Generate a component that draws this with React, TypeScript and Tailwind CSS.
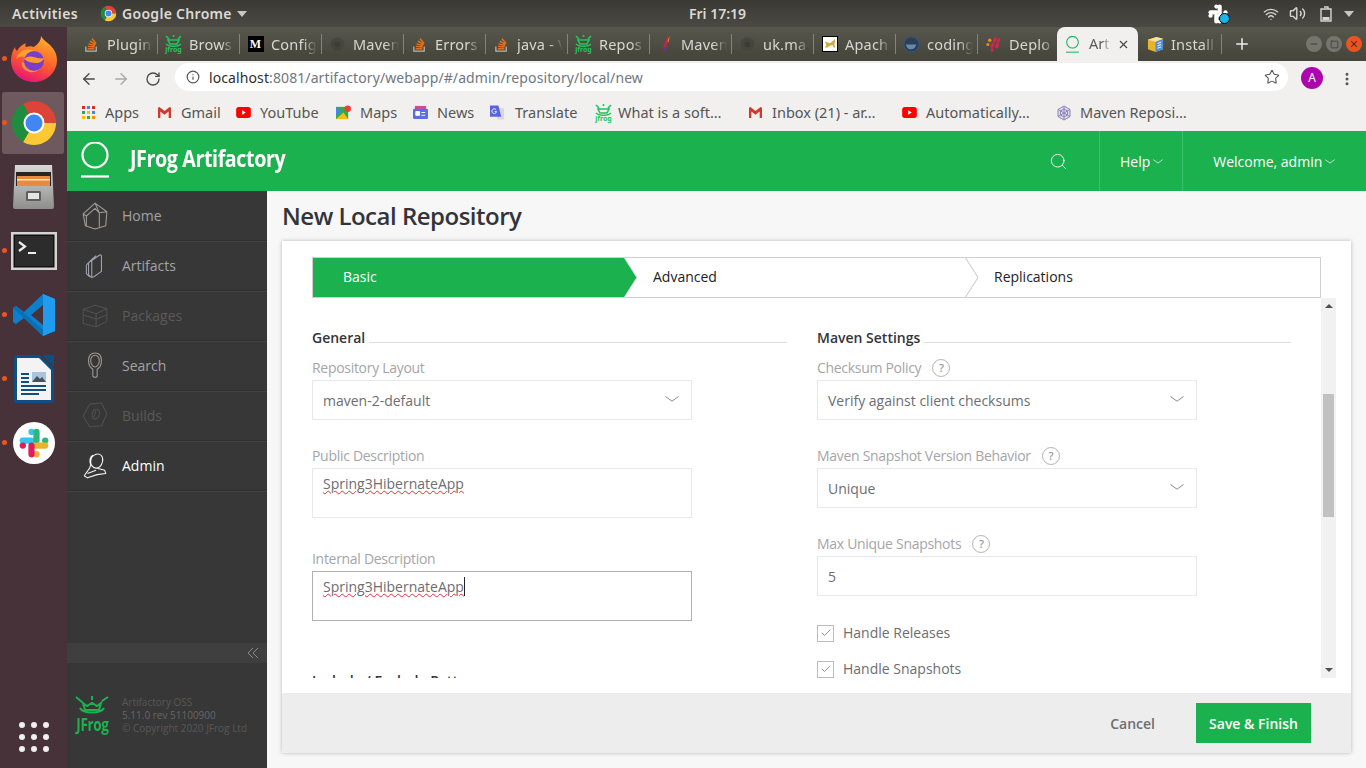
import React from "react";
import { ArrowLeft, ArrowRight, RotateCw, Info, Star, X, Plus, Search, Check, Minus, Square, Wifi, Volume2, EllipsisVertical } from "lucide-react";

const Chrome = ({ s }: { s: string }) => (
  <svg viewBox="0 0 48 48" className={s}>
    <path d="M24 24L13 4.95A22 22 0 0 1 46 24Z" fill="#db4437" />
    <path d="M24 24L46 24A22 22 0 0 1 13 43.05Z" fill="#fcc934" />
    <path d="M24 24L13 43.05A22 22 0 0 1 13 4.95Z" fill="#1e8e3e" />
    <circle cx="24" cy="24" r="10.5" fill="#fff" />
    <circle cx="24" cy="24" r="8.5" fill="#4285f4" />
  </svg>
);
const Firefox = () => (
  <svg viewBox="0 0 48 48" className="w-[48px] h-[48px]">
    <defs>
      <linearGradient id="ff" x1="0.7" y1="0" x2="0.3" y2="1">
        <stop offset="0" stopColor="#ffb32c" />
        <stop offset="0.55" stopColor="#ff5a2c" />
        <stop offset="1" stopColor="#e3127a" />
      </linearGradient>
    </defs>
    <path d="M31 1c2 4 6 6 9 9 5 5 7 10 7 15 0 12-10 22-23 22S1 38 1 25c0-5 2-10 4-13 0 2 1 3 2 4 2-4 5-6 9-8-1 2-1 3 0 4 3-1 5-1 8 0 4-3 7-6 7-11z" fill="url(#ff)" />
    <path d="M6 24c2-7 9-11 16-9 8 1 13 8 11 15-3 6-10 9-16 6-4-2-6-5-5-9l5 2c4 1 8-1 9-4-4 1-9-2-12-3-3-1-6 0-8 2z" fill="#ffd23c" opacity="0.55" />
    <circle cx="24" cy="26" r="10" fill="#7b3fc7" />
    <path d="M14 24c3-3 7-3 10-2 3 1 7 2 10 1-1 3-4 5-8 5-4 0-8-1-12-4z" fill="#ff9a2c" />
  </svg>
);
const Files = () => (
  <svg viewBox="0 0 44 46" className="w-[44px] h-[46px]">
    <defs>
      <linearGradient id="fc" x1="0" y1="0" x2="0" y2="1">
        <stop offset="0" stopColor="#d8d8d6" />
        <stop offset="1" stopColor="#8e8e8c" />
      </linearGradient>
    </defs>
    <path d="M3 1h37l2 42a2 2 0 0 1-2 2H3a2 2 0 0 1-2-2z" fill="url(#fc)" />
    <rect x="4" y="8" width="35" height="14" fill="#2a2623" />
    <rect x="5" y="12" width="33" height="10" fill="#e98a3f" />
    <rect x="5" y="15" width="33" height="1.5" fill="#fbe5c7" />
    <rect x="14" y="27" width="15" height="10" rx="1.5" fill="#5e5e5c" />
    <rect x="16" y="29" width="11" height="6" fill="#e6e6e4" />
  </svg>
);
const Terminal = () => (
  <svg viewBox="0 0 46 38" className="w-[46px] h-[38px]">
    <rect x="0" y="0" width="46" height="38" fill="#d4d4d1" />
    <rect x="2.5" y="2.5" width="41" height="33" fill="#111" />
    <rect x="4" y="4" width="38" height="30" fill="#2c2c2c" />
    <path d="M8 10l6 4.5-6 4.5" fill="none" stroke="#eee" strokeWidth="2.2" />
    <path d="M17 21h8" stroke="#eee" strokeWidth="2" />
  </svg>
);
const VSCode = () => (
  <svg viewBox="0 0 44 44" className="w-[44px] h-[44px]">
    <path d="M31 1l12 5v32l-12 5L12 25 4 31l-3-2V15l3-2 8 6z" fill="#0e7fcb" />
    <path d="M31 1l12 5v32l-12 5z" fill="#1f9cf0" />
    <path d="M31 12L19 22l12 10z" fill="#47323a" />
    <path d="M1 15l3-2 27 24v6z" fill="#0a6fb5" />
  </svg>
);
const Writer = () => (
  <svg viewBox="0 0 42 48" className="w-[42px] h-[48px]">
    <path d="M1 3a3 3 0 0 1 3-3h23l14 14v31a3 3 0 0 1-3 3H4a3 3 0 0 1-3-3z" fill="#0d4f80" />
    <path d="M4 3h22l12 12v30H4z" fill="#f3f3f3" />
    <path d="M29 0h12v12z" fill="#0d4f80" />
    <rect x="8" y="18" width="8" height="2" fill="#0d4f80" /><rect x="8" y="22" width="8" height="2" fill="#0d4f80" /><rect x="8" y="26" width="8" height="2" fill="#0d4f80" />
    <rect x="19" y="17" width="14" height="10" fill="#a9c4dc" />
    <path d="M19 27l5-6 3 3 2-2 4 5z" fill="#45525c" />
    <rect x="8" y="30" width="25" height="2" fill="#0d4f80" /><rect x="8" y="34" width="25" height="2" fill="#0d4f80" /><rect x="8" y="38" width="18" height="2" fill="#0d4f80" />
  </svg>
);
const SlackMark = ({ s, mono }: { s: string; mono?: boolean }) => (
  <svg viewBox="0 0 24 24" className={s}>
    <g strokeWidth="5" strokeLinecap="round" fill="none">
      <path d="M3 10h7" stroke={mono ? "#fff" : "#36c5f0"} />
      <path d="M10 3v.1" stroke={mono ? "#fff" : "#36c5f0"} />
      <path d="M14 3v7" stroke={mono ? "#fff" : "#2eb67d"} />
      <path d="M21 10h-.1" stroke={mono ? "#fff" : "#2eb67d"} />
      <path d="M21 14h-7" stroke={mono ? "#fff" : "#ecb22e"} />
      <path d="M14 21v-.1" stroke={mono ? "#fff" : "#ecb22e"} />
      <path d="M10 21v-7" stroke={mono ? "#fff" : "#e01e5a"} />
      <path d="M3 14h.1" stroke={mono ? "#fff" : "#e01e5a"} />
    </g>
  </svg>
);

const SO = () => (
  <svg viewBox="0 0 18 18" className="w-[17px] h-[17px] shrink-0">
    <path d="M3 11v5h11v-5" fill="none" stroke="#b9b6ae" strokeWidth="1.3" />
    <path d="M5 13.5h7M5.2 11l7 .6M5.9 8.3l6.8 1.7M7.3 5.5l6 3.3M9.5 3l4.4 5" fill="none" stroke="#e8711f" strokeWidth="1.5" />
  </svg>
);
const FrogIcon = () => (
  <span className="w-[17px] h-[18px] shrink-0 flex flex-col items-center">
    <svg viewBox="0 0 17 12" className="w-[17px] h-[12px]">
      <path d="M1 1l3 3M16 1l-3 3M8.5 0v2M3 5h11l-2 4H5zM1 9c3 3 12 3 15 0" fill="none" stroke="#22c55e" strokeWidth="1.6" />
    </svg>
    <span className="text-[7px] leading-[6px] font-bold text-[#22c55e]">jfrog</span>
  </span>
);
const DarkDot = () => (
  <svg viewBox="0 0 18 18" className="w-[17px] h-[17px] shrink-0">
    <circle cx="9" cy="9" r="7.5" fill="#45443d" stroke="#4d4c45" />
    <circle cx="9" cy="9" r="3" fill="#3c3b35" />
  </svg>
);
const Medium = () => (
  <span className="w-[16px] h-[16px] shrink-0 bg-black text-white text-[12px] leading-[16px] font-bold text-center [font-family:'Liberation_Serif',serif]">M</span>
);
const Feather = () => (
  <svg viewBox="0 0 18 18" className="w-[17px] h-[17px] shrink-0">
    <path d="M13 0c-4 3-6 9-7 16l3-1c1-5 3-10 4-15z" fill="#c2264b" />
    <path d="M13 0l-2 6 1.2.5C13 4 13.4 2 13 0z" fill="#ef7c2b" />
    <path d="M6 16l1-5 2 1-.5 3z" fill="#6a2d8e" />
  </svg>
);
const Tomcat = () => (
  <svg viewBox="0 0 16 16" className="w-[16px] h-[16px] shrink-0 bg-white border border-black">
    <path d="M2 5l3 1 3 1 4-3 1-2 1 3-1 3 1 4h-2l-1-3-3 1-3 2H2l2-3z" fill="#d6a63e" />
  </svg>
);
const Docker = () => (
  <svg viewBox="0 0 18 18" className="w-[17px] h-[17px] shrink-0">
    <circle cx="9" cy="9" r="8" fill="#2b3f58" stroke="#2d5a88" />
    <path d="M3 9h11c-1 4-3 5-6 5-3 0-4-2-5-5z" fill="#6b8aa8" />
  </svg>
);
const Deploy = () => (
  <svg viewBox="0 0 18 18" className="w-[17px] h-[17px] shrink-0">
    <g fill="#d8234f">
      <rect x="9" y="1" width="3" height="6" rx="1.5" transform="rotate(20 10 4)" />
      <rect x="13" y="2" width="3" height="5" rx="1.5" transform="rotate(20 14 4)" />
      <rect x="6" y="7" width="3.5" height="6" rx="1.7" transform="rotate(20 8 10)" />
      <rect x="11" y="7" width="3.5" height="6" rx="1.7" transform="rotate(20 12 10)" />
      <rect x="6" y="13" width="3" height="4" rx="1.5" transform="rotate(20 8 15)" />
    </g>
    <g fill="#ef8a2b">
      <circle cx="3" cy="9" r="1.6" /><circle cx="5" cy="4.5" r="1.8" />
    </g>
  </svg>
);
const BoxIcon = () => (
  <svg viewBox="0 0 18 18" className="w-[17px] h-[17px] shrink-0">
    <path d="M1 4l9-3 7 2v11l-8 3-8-3z" fill="#e7b52c" />
    <path d="M9 6l8-3v11l-8 3z" fill="#4f8fd6" />
    <path d="M11 8l4-1.500M11 10.500l4-1.500M11 13l4-1.500" stroke="#fff" />
    <path d="M1 4l8 2 8-3-7-2z" fill="#f7e39c" />
  </svg>
);
const ArtLogo = ({ s }: { s: string }) => (
  <svg viewBox="0 0 28 36" className={s} fill="none" stroke="currentColor">
    <circle cx="14" cy="13" r="12.500" strokeWidth="2.200" />
    <path d="M0 34.500h28" strokeWidth="2.200" />
  </svg>
);
const Caret = ({ s, stroke }: { s: string; stroke: string }) => (
  <svg viewBox="0 0 14 6" className={s} fill="none" stroke={stroke} strokeWidth="1">
    <path d="M0.500 0.500L7 5.200l6.500-4.700" />
  </svg>
);

const tabs: { icon: React.ReactNode; label: string }[] = [
  { icon: <SO />, label: "Plugin" },
  { icon: <FrogIcon />, label: "Brows" },
  { icon: <Medium />, label: "Config" },
  { icon: <DarkDot />, label: "Maven" },
  { icon: <SO />, label: "Errors" },
  { icon: <SO />, label: "java - V" },
  { icon: <FrogIcon />, label: "Repos" },
  { icon: <Feather />, label: "Maven" },
  { icon: <DarkDot />, label: "uk.ma" },
  { icon: <Tomcat />, label: "Apach" },
  { icon: <Docker />, label: "coding" },
  { icon: <Deploy />, label: "Deplo" },
];

const Tab = ({ icon, label, last }: { icon: React.ReactNode; label: string; last?: boolean }) => (
  <div className="w-[82px] shrink-0 h-[34px] flex items-center">
    <div className={`w-[81px] h-[20px] flex items-center pl-[6px] ${last ? "" : "border-r border-[#85837a]"}`}>
      <span className="w-[17px] flex justify-center">{icon}</span>
      <span className="ml-[7px] w-[46px] overflow-hidden whitespace-nowrap text-[14.5px] leading-[20px] tracking-[0.2px] text-[#d9d7d0] [mask-image:linear-gradient(90deg,#000_70%,transparent)]">{label}</span>
    </div>
  </div>
);

const Gmail = () => (
  <svg viewBox="0 0 16 14" className="w-[15px] h-[13px]">
    <path d="M1 2v11h2.500V6L8 9.500 12.500 6v7H15V2l-1.500-1L8 5.500 2.500 1z" fill="#cf3a2a" />
  </svg>
);
const YT = () => (
  <svg viewBox="0 0 16 12" className="w-[15px] h-[11px]">
    <rect width="16" height="12" rx="3" fill="#f00" />
    <path d="M6.500 3.500l4 2.500-4 2.500z" fill="#fff" />
  </svg>
);

const bookmarks: { w: string; icon: React.ReactNode; label: string; gap: string }[] = [
  {
    w: "w-[75px]", gap: "ml-[10px]", label: "Apps",
    icon: (
      <span className="grid grid-cols-3 gap-[2px] w-[13px]">
        {["bg-[#d93025]", "bg-[#4285f4]", "bg-[#d93025]", "bg-[#34a853]", "bg-[#fbbc04]", "bg-[#4285f4]", "bg-[#fbbc04]", "bg-[#34a853]", "bg-[#fb8c00]"].map((c, i) => (
          <span key={i} className={`w-[3px] h-[3px] ${c}`} />
        ))}
      </span>
    ),
  },
  { w: "w-[79px]", gap: "ml-[9px]", label: "Gmail", icon: <Gmail /> },
  { w: "w-[100px]", gap: "ml-[9px]", label: "YouTube", icon: <YT /> },
  {
    w: "w-[77px]", gap: "ml-[9px]", label: "Maps",
    icon: (
      <svg viewBox="0 0 16 16" className="w-[15px] h-[15px]">
        <path d="M0 2h13v13H0z" fill="#34a853" />
        <path d="M0 15l8-7 5 7z" fill="#fbbc04" />
        <path d="M0 2l5 5-5 4z" fill="#4285f4" />
        <circle cx="12.500" cy="4" r="3.500" fill="#ea4335" />
      </svg>
    ),
  },
  {
    w: "w-[77px]", gap: "ml-[9px]", label: "News",
    icon: (
      <svg viewBox="0 0 16 16" className="w-[15px] h-[15px]">
        <rect x="2" y="1" width="12" height="5" fill="#d84a8f" />
        <rect y="4" width="16" height="11" rx="1.500" fill="#5b6ee1" />
        <path d="M3 7h4v4H3zM9 8h4M9 11h4" fill="#fff" stroke="#fff" />
      </svg>
    ),
  },
  {
    w: "w-[105px]", gap: "ml-[10px]", label: "Translate",
    icon: (
      <svg viewBox="0 0 16 16" className="w-[15px] h-[16px]">
        <path d="M5 3h10v12H8z" fill="#d7d7dd" />
        <path d="M0 0h9l3 12H0z" fill="#5a63e8" />
        <path d="M6.500 4.500a2.500 2.500 0 1 0 .5 2H5" fill="none" stroke="#fff" />
      </svg>
    ),
  },
  { w: "w-[153px]", gap: "ml-[6px]", label: "What is a soft…", icon: <FrogIcon /> },
  { w: "w-[154px]", gap: "ml-[9px]", label: "Inbox (21) - ar…", icon: <Gmail /> },
  { w: "w-[154px]", gap: "ml-[9px]", label: "Automatically…", icon: <YT /> },
  {
    w: "w-[140px]", gap: "ml-[8px]", label: "Maven Reposi…",
    icon: (
      <svg viewBox="0 0 16 16" className="w-[16px] h-[16px]" fill="none" stroke="#8a83b8">
        <path d="M8 1l6 3.500v7L8 15l-6-3.500v-7z" fill="#e2e0ee" />
        <path d="M8 4l3.500 2v4L8 12l-3.500-2V6zM8 1v14M2 4.500l12 7M14 4.500l-12 7" />
      </svg>
    ),
  },
];

const nav: { label: string; tone: string; stroke: string; icon: React.ReactNode }[] = [
  {
    label: "Home", tone: "text-[#a3a3a3]", stroke: "#a09a96",
    icon: <path d="M1 11L12 1l11 8-1 13-10 3-9-3zM1 11l3 2v9M4 13l8-7 4 4v14M12 1l4 9 7-1M12 25l4-1" />,
  },
  {
    label: "Artifacts", tone: "text-[#a3a3a3]", stroke: "#9ca2ae",
    icon: <path d="M9 8l7-5q2-1 2 1v14l-7 5q-2 1-2-1zM6 10l7-6.500M6 10v11l3 3M4 12l6-6M4 12v8l3 3" />,
  },
  {
    label: "Packages", tone: "text-[#5a5a5a]", stroke: "#505050",
    icon: <path d="M1 7l11-4 11 3v12l-10 5-12-3zM1 7l12 4 10-5M13 11v12M1 12l12 4 10-4" />,
  },
  {
    label: "Search", tone: "text-[#a3a3a3]", stroke: "#a09a96",
    icon: <path d="M12 1c4 0 6 3 6 7 0 4-2 7-4 8v6c0 2-4 2-4 0v-6c-2-1-4-4-4-8 0-4 2-7 6-7zM12 3c2 0 4 2 4 5s-2 6-4 6-4-3-4-6 2-5 4-5z" />,
  },
  {
    label: "Builds", tone: "text-[#5a5a5a]", stroke: "#505050",
    icon: <path d="M7 2l11-1 5 10-5 11-11 1L1 13zM12 7c3-1 5 1 4 5-1 3-4 5-6 3-2-2 0-7 2-8zM13 8l-2 6" />,
  },
  {
    label: "Admin", tone: "text-white", stroke: "#f4f4f4",
    icon: <path d="M13 2c4-1 7 2 6 7-1 4-3 6-6 6-3 0-5-3-5-6 0-4 2-6 5-7zM10 3c-3 2-3 6-2 9l-1 3-5 7 3 2 9-3 8-1-1-3-7-2M5 20l8-3" />,
  },
];

const Heading = ({ children }: { children: React.ReactNode }) => (
  <div className="flex items-center h-[20px] gap-[4px]">
    <span className="mb-[2px] text-[14px] font-semibold text-[#33343a] whitespace-nowrap">{children}</span>
    <span className="flex-1 border-t border-[#dcdcdc] mt-[8px]" />
  </div>
);
const Help = () => (
  <span className="ml-[11px] mt-[2px] w-[18px] h-[18px] rounded-full border-[1.500px] border-[#b5b5b5] text-[#9a9a9a] text-[11px] leading-[15px] text-center font-semibold">?</span>
);
const Label = ({ children, help, cls }: { children: React.ReactNode; help?: boolean; cls: string }) => (
  <div className={`flex items-center h-[20px] pb-[2px] text-[14px] text-[#a5a5a8] tracking-[-0.3px] ${cls}`}>
    <span>{children}</span>
    {help && <Help />}
  </div>
);
const Select = ({ value }: { value: string }) => (
  <div className="mt-[2px] w-[380px] h-[40px] border border-[#e8e8e8] flex items-center justify-between pl-[10px] pr-[12px] text-[14px] text-[#6d6d72]">
    <span>{value}</span>
    <Caret s="w-[14px] h-[6px] mb-[3px]" stroke="#8a8a8a" />
  </div>
);
const Area = ({ focus, cls }: { focus?: boolean; cls?: string }) => (
  <div className={`mt-[2px] w-[380px] h-[50px] border pl-[10px] pt-[5px] text-[14px] leading-[20px] text-[#6d6d72] ${focus ? "border-[#b0b0b0]" : "border-[#e8e8e8]"} ${cls ?? ""}`}>
    <span className={`underline decoration-wavy decoration-[#e0303a] decoration-1 ${focus ? "border-r border-[#222]" : ""}`}>Spring3HibernateApp</span>
  </div>
);
const Check2 = ({ label, cls }: { label: string; cls: string }) => (
  <div className={`flex items-center h-[16px] ${cls}`}>
    <span className="w-[17px] h-[17px] border border-[#bdbdbd] flex items-center justify-center">
      <Check className="w-[12px] h-[12px] text-[#6f6f6f]" strokeWidth={1.500} />
    </span>
    <span className="ml-[9px] mb-[2px] text-[14px] text-[#6d6d72]">{label}</span>
  </div>
);

export default function App() {
  return (
    <div className="w-[1366px] h-[768px] overflow-hidden flex flex-col [font-family:'Open_Sans',sans-serif]">
      {/* GNOME bar */}
      <div className="h-[27px] shrink-0 bg-[linear-gradient(#3a3934,#4a4943)] flex items-center text-[14px] text-[#dcdad4] [font-family:'Noto_Sans',sans-serif] font-semibold">
        <span className="ml-[12px] w-[88px] tracking-[0.35px]">Activities</span>
        <Chrome s="w-[17px] h-[17px]" />
        <span className="ml-[5px] tracking-[0.3px] w-[110px] whitespace-nowrap">Google Chrome</span>
        <svg viewBox="0 0 10 6" className="ml-[5px] w-[10px] h-[6px]"><path d="M0 0h10L5 6z" fill="#c9c7c0" /></svg>
        <span className="ml-[442px] w-[528px]">Fri 17:19</span>
        <span className="relative w-[22px] h-[20px] ml-[-9px] mr-[5px]">
          <SlackMark s="w-[20px] h-[20px]" mono />
          <span className="absolute right-[0px] bottom-[0px] w-[11px] h-[11px] rounded-full bg-[#19b5e6] border border-black" />
        </span>
        <Wifi className="ml-[28px] w-[16px] h-[16px] text-[#d8d6d0]" strokeWidth={2} />
        <Volume2 className="ml-[10px] w-[17px] h-[17px] text-[#d8d6d0]" strokeWidth={2} />
        <svg viewBox="0 0 12 16" className="ml-[14px] w-[12px] h-[16px]" fill="none" stroke="#d8d6d0" strokeWidth="1.400">
          <path d="M1 3h10v12H1zM4 1h4v2" /><rect x="2.500" y="11" width="7" height="3" fill="#d8d6d0" stroke="none" />
        </svg>
        <svg viewBox="0 0 10 6" className="ml-[12px] w-[10px] h-[6px]"><path d="M0 0h10L5 6z" fill="#c9c7c0" /></svg>
      </div>

      <div className="flex-1 flex min-h-0">
        {/* Dock */}
        <div className="w-[67px] shrink-0 bg-[#47323a] flex flex-col items-center">
          {[
            { n: <Firefox />, dot: true },
            { n: <Chrome s="w-[48px] h-[48px]" />, dot: true, active: true },
            { n: <Files />, dot: false },
            { n: <Terminal />, dot: true },
            { n: <VSCode />, dot: true },
            { n: <Writer />, dot: true },
            {
              n: (
                <span className="w-[42px] h-[42px] rounded-full bg-white flex items-center justify-center">
                  <SlackMark s="w-[30px] h-[30px]" />
                </span>
              ),
              dot: true,
            },
          ].map((d, i) => (
            <div key={i} className="relative w-[67px] h-[64px] flex items-center justify-center">
              {d.active && <span className="absolute left-[2px] top-[1px] w-[62px] h-[62px] rounded-[3px] bg-[#6e5a5e]" />}
              <span className="relative flex">{d.n}</span>
              {d.dot && <span className="absolute left-[2px] top-[29px] w-[5px] h-[5px] rounded-full bg-[#e95420]" />}
            </div>
          ))}
          <div className="mt-auto mb-[16px] grid grid-cols-3 gap-x-[6px] gap-y-[6px]">
            {Array.from({ length: 9 }).map((_, i) => (
              <span key={i} className="w-[6px] h-[6px] rounded-full bg-[#f0f0f0]" />
            ))}
          </div>
        </div>

        {/* Browser */}
        <div className="flex-1 min-w-0 flex flex-col [font-family:'Noto_Sans',sans-serif]">
          {/* Tab strip */}
          <div className="h-[34px] shrink-0 bg-[linear-gradient(#58574d,#45443b)] flex items-center pl-[10px]">
            {tabs.map((t, i) => (
              <Tab key={i} icon={t.icon} label={t.label} last={i === 11} />
            ))}
            <div className="ml-[-4px] mr-[3px] w-[81px] shrink-0 h-[34px] bg-[#f1f0ee] rounded-t-[8px] flex items-center pl-[9px]">
              <ArtLogo s="w-[13px] h-[17px] text-[#1fb25a]" />
              <span className="ml-[10px] w-[22px] overflow-hidden text-[14.500px] text-[#5a5a5a] [mask-image:linear-gradient(90deg,#000_60%,transparent)]">Artifactory</span>
              <X className="ml-[6px] w-[13px] h-[13px] text-[#444]" strokeWidth={2} />
            </div>
            <Tab icon={<BoxIcon />} label="Install" />
            <Plus className="ml-[10px] w-[18px] h-[18px] text-[#eee]" strokeWidth={2} />
            <div className="ml-auto mr-[4px] flex gap-[4px]">
              <span className="w-[16px] h-[16px] rounded-full bg-[#75746d] flex items-center justify-center"><Minus className="w-[10px] h-[10px] text-[#3a3a36]" strokeWidth={2.500} /></span>
              <span className="w-[16px] h-[16px] rounded-full bg-[#75746d] flex items-center justify-center"><Square className="w-[9px] h-[9px] text-[#3a3a36]" strokeWidth={2} /></span>
              <span className="w-[16px] h-[16px] rounded-full bg-[#e95420] flex items-center justify-center"><X className="w-[10px] h-[10px] text-[#4a2010]" strokeWidth={2.500} /></span>
            </div>
          </div>

          {/* Toolbar */}
          <div className="h-[35px] shrink-0 bg-[#f1f0ee] flex items-center">
            <ArrowLeft className="ml-[13px] w-[18px] h-[18px] text-[#4a4a4a]" strokeWidth={1.800} />
            <ArrowRight className="ml-[14px] w-[18px] h-[18px] text-[#a8a8a8]" strokeWidth={1.800} />
            <RotateCw className="ml-[15px] w-[16px] h-[16px] text-[#4a4a4a]" strokeWidth={2} />
            <div className="ml-[14px] w-[1113px] h-[28px] rounded-full bg-white flex items-center mb-[3px]">
              <Info className="ml-[11px] w-[14px] h-[14px] text-[#555]" strokeWidth={2} />
              <span className="ml-[9px] text-[14px] tracking-[0.1px] text-[#6f7780]"><span className="text-[#2e2e2e]">localhost</span>:8081/artifactory/webapp/#/admin/repository/local/new</span>
              <Star className="ml-auto mr-[8px] w-[16px] h-[16px] text-[#555]" strokeWidth={1.600} />
            </div>
            <span className="ml-[13px] w-[22px] h-[22px] rounded-full bg-[#ab05ad] text-white text-[12px] leading-[22px] text-center mb-[2px]">A</span>
            <EllipsisVertical className="ml-[16px] w-[16px] h-[16px] text-[#555]" strokeWidth={2.500} />
          </div>

          {/* Bookmarks */}
          <div className="h-[35px] shrink-0 bg-[#f1f0ee] flex items-center pl-[15px] pb-[2px] text-[14.500px] text-[#555]">
            {bookmarks.map((b, i) => (
              <div key={i} className={`${b.w} shrink-0 flex items-center whitespace-nowrap`}>
                <span className="flex items-center justify-center">{b.icon}</span>
                <span className={b.gap}>{b.label}</span>
              </div>
            ))}
          </div>

          {/* App */}
          <div className="flex-1 min-h-0 flex flex-col [font-family:'Open_Sans',sans-serif]">
            <div className="h-[60px] shrink-0 bg-[#1bb14e] flex items-center text-white">
              <ArtLogo s="ml-[14px] w-[28px] h-[36px] mb-[2px] text-white" />
              <span className="ml-[21px] w-[155px] whitespace-nowrap text-[24px] font-bold origin-left scale-x-[0.82] mb-[6px] tracking-[-0.5px]">JFrog Artifactory</span>
              <Search className="ml-[764px] w-[19px] h-[19px] text-white" strokeWidth={1.100} />
              <span className="ml-[31px] h-[60px] border-l border-[#3cc16a]" />
              <span className="ml-[20px] text-[14px]">Help</span>
              <Caret s="ml-[3px] w-[10px] h-[5px]" stroke="#ffffff" />
              <span className="ml-[19px] h-[60px] border-l border-[#3cc16a]" />
              <span className="ml-[30px] text-[14px]">Welcome, admin</span>
              <Caret s="ml-[3px] w-[10px] h-[5px]" stroke="#ffffff" />
            </div>

            <div className="flex-1 min-h-0 flex">
              {/* Sidebar */}
              <div className="w-[200px] shrink-0 bg-[#373737] flex flex-col">
                {nav.map((n, i) => (
                  <div key={i} className="h-[50px] shrink-0 flex items-center border-b-[1px] border-[#2f2f2f] shadow-[0_1px_0_#444]">
                    <svg viewBox="0 0 24 26" className="ml-[15px] w-[26px] h-[28px] fill-none" stroke={n.stroke} strokeWidth="1" strokeLinejoin="round">{n.icon}</svg>
                    <span className={`ml-[14px] text-[14px] ${n.tone}`}>{n.label}</span>
                  </div>
                ))}
                <div className="mt-auto h-[20px] bg-[#3f3f3f] flex items-center justify-end pr-[8px]">
                  <svg viewBox="0 0 12 12" className="w-[12px] h-[12px]" fill="none" stroke="#8a8a8a"><path d="M6 1L1 6l5 5M11 1L6 6l5 5" /></svg>
                </div>
                <div className="h-[105px] flex items-start pt-[33px] pl-[8px]">
                  <div className="w-[34px] flex flex-col items-center">
                    <svg viewBox="0 0 34 20" className="w-[34px] h-[20px]" fill="none" stroke="#1eb14f" strokeWidth="2">
                      <path d="M1 1l6 5M33 1l-6 4M17 0v4M8 7l4 3 5-3 5 3 4-3-2 7H10zM5 12c3 6 21 6 24 0" />
                    </svg>
                    <span className="text-[18px] leading-[16px] font-bold text-[#1eb14f] origin-top scale-x-[0.75] tracking-[-0.5px]">JFrog</span>
                  </div>
                  <div className="ml-[13px] text-[10px] leading-[13px] text-[#666] whitespace-nowrap">
                    <div className="text-[#585858]">Artifactory OSS</div>
                    <div>5.11.0 rev 51100900</div>
                    <div className="text-[#585858]">© Copyright 2020 JFrog Ltd</div>
                  </div>
                </div>
              </div>

              {/* Main */}
              <div className="flex-1 min-w-0 bg-[#f7f7f7] flex flex-col px-[15px] pb-[15px]">
                <div className="h-[50px] shrink-0 flex items-center text-[24px] font-semibold text-[#33343a] tracking-[-0.5px]">New Local Repository</div>
                <div className="flex-1 min-h-0 bg-white shadow-[0_0_4px_rgba(0,0,0,0.25)] flex flex-col">
                  <div className="mt-[16px] ml-[30px] mr-[30px] h-[41px] shrink-0 border border-[#cfcfcf] flex text-[14px]">
                    <div className="relative w-[312px] bg-[#1bb14e] text-white flex items-center pl-[30px] pb-[2px]">
                      Basic
                      <svg viewBox="0 0 12 41" preserveAspectRatio="none" className="absolute left-[311px] top-[-1px] w-[13px] h-[41px]"><path d="M0 0l12 20.500L0 41z" fill="#1bb14e" /><path d="M0 0l12 20.500L0 41" fill="none" stroke="#e0e0e0" /></svg>
                    </div>
                    <div className="relative w-[341px] flex items-center pl-[28px] pb-[2px] text-[#222]">
                      Advanced
                      <svg viewBox="0 0 12 41" preserveAspectRatio="none" className="absolute left-[340px] top-[-1px] w-[13px] h-[41px]"><path d="M0 0l12 20.500L0 41" fill="#fff" stroke="#cfcfcf" /></svg>
                    </div>
                    <div className="flex-1 flex items-center pl-[28px] pb-[2px] text-[#222]">Replications</div>
                  </div>

                  <div className="ml-[30px] mr-[15px] h-[380px] shrink-0 flex overflow-hidden">
                    <div className="flex-1 flex pt-[30px] gap-[30px] pr-[30px] overflow-hidden">
                      <div className="w-[475px] shrink-0">
                        <Heading>General</Heading>
                        <Label cls="mt-[10px]">Repository Layout</Label>
                        <Select value="maven-2-default" />
                        <Label cls="mt-[26px]">Public Description</Label>
                        <Area />
                        <Label cls="mt-[31px]">Internal Description</Label>
                        <Area focus />
                        <div className="mt-[50px]"><Heading>Include / Exclude Patterns</Heading></div>
                      </div>
                      <div className="w-[474px] shrink-0">
                        <Heading>Maven Settings</Heading>
                        <Label cls="mt-[10px]" help>Checksum Policy</Label>
                        <Select value="Verify against client checksums" />
                        <Label cls="mt-[26px]" help>Maven Snapshot Version Behavior</Label>
                        <Select value="Unique" />
                        <Label cls="mt-[26px]" help>Max Unique Snapshots</Label>
                        <div className="mt-[2px] w-[380px] h-[40px] border border-[#e8e8e8] flex items-center pl-[10px] text-[14px] text-[#6d6d72]">5</div>
                        <Check2 cls="mt-[29px]" label="Handle Releases" />
                        <Check2 cls="mt-[20px]" label="Handle Snapshots" />
                      </div>
                    </div>
                    <div className="w-[15px] shrink-0 bg-[#f1f1f1] flex flex-col items-center">
                      <svg viewBox="0 0 8 4" className="mt-[6px] w-[8px] h-[4px]"><path d="M4 0l4 4H0z" fill="#505050" /></svg>
                      <span className="mt-[86px] w-[11px] h-[123px] bg-[#c1c1c1]" />
                      <svg viewBox="0 0 8 4" className="mt-auto mb-[6px] w-[8px] h-[4px]"><path d="M0 0h8L4 4z" fill="#505050" /></svg>
                    </div>
                  </div>

                  <div className="mt-auto h-[60px] shrink-0 bg-[#ededed] flex items-center justify-end pr-[40px]">
                    <span className="text-[14px] font-semibold text-[#6d6d72]">Cancel</span>
                    <span className="ml-[41px] w-[115px] h-[40px] bg-[#1bb14e] text-white text-[14px] font-semibold flex items-center justify-center">Save &amp; Finish</span>
                  </div>
                </div>
              </div>
            </div>
          </div>
        </div>
      </div>
    </div>
  );
}
